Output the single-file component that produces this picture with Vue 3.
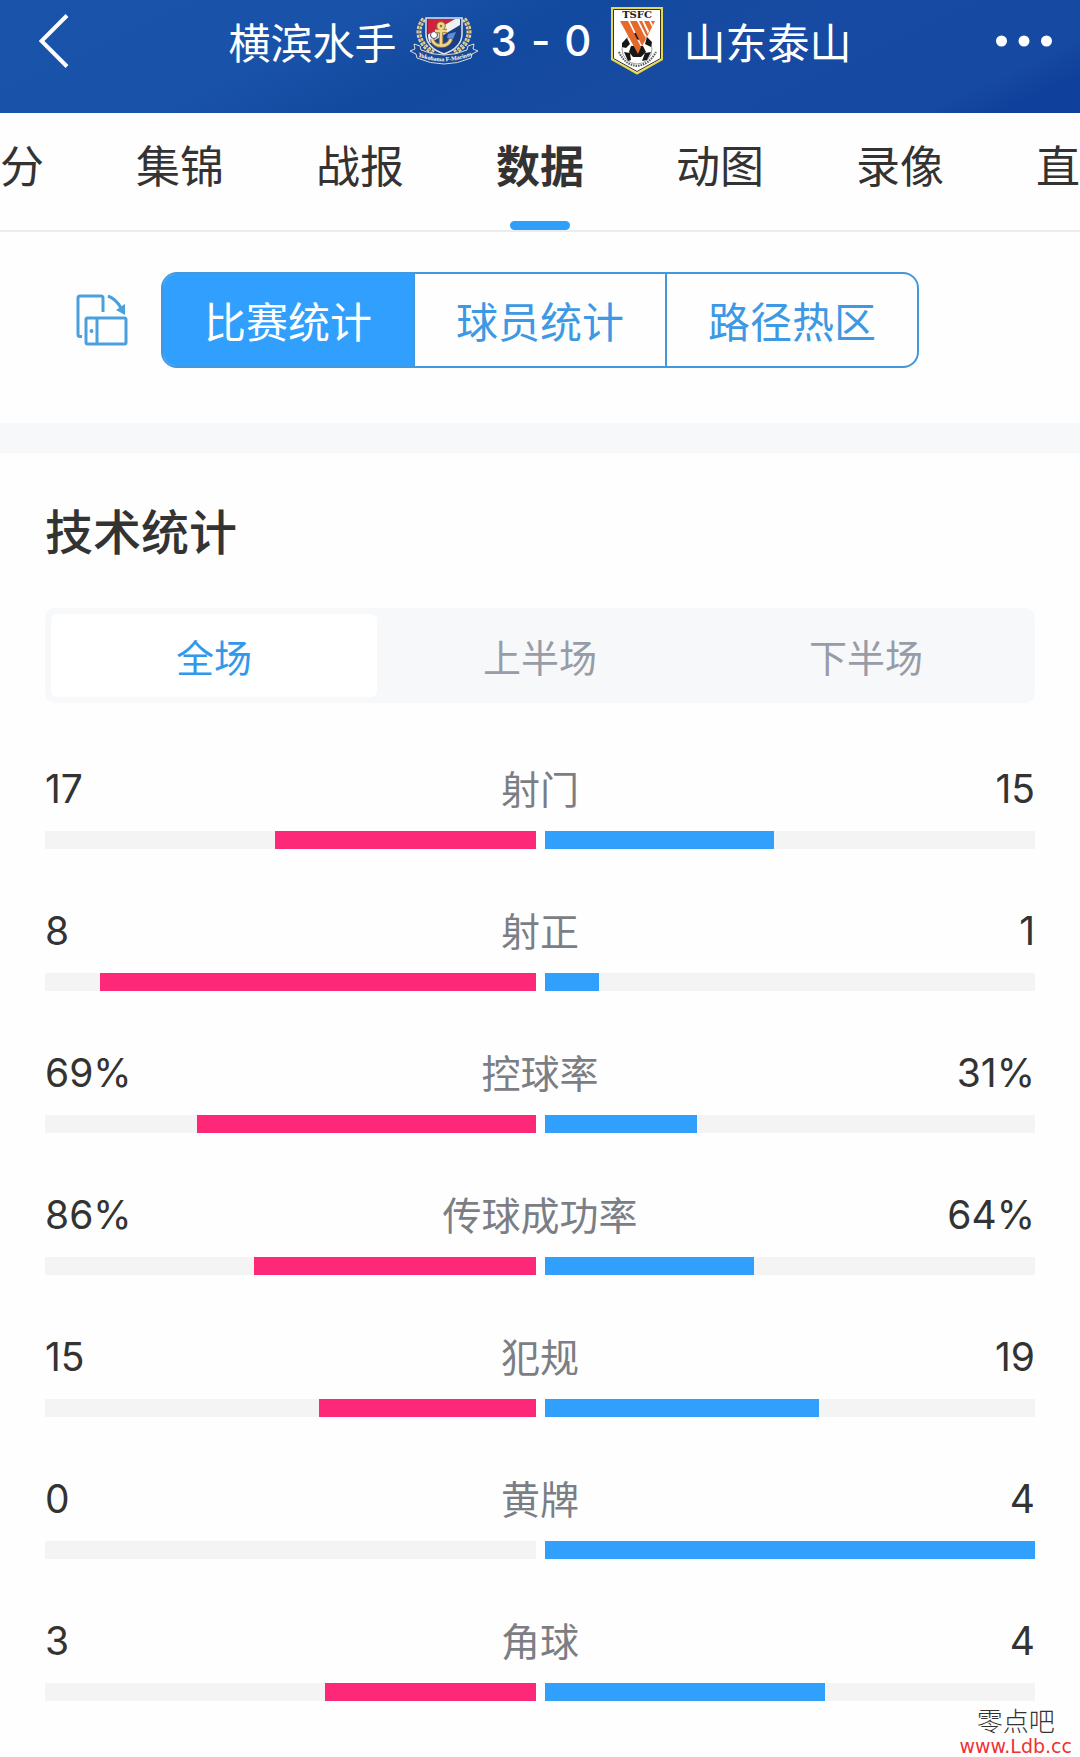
<script setup>
import { ref } from 'vue'

const tabs = ['分', '集锦', '战报', '数据', '动图', '录像', '直']
const activeTab = ref('数据')

const views = ['比赛统计', '球员统计', '路径热区']
const activeView = ref('比赛统计')

const periods = ['全场', '上半场', '下半场']
const activePeriod = ref('全场')

const stats = [
  { label: '射门', home: 17, away: 15 },
  { label: '射正', home: 8, away: 1 },
  { label: '控球率', home: 69, away: 31, unit: '%' },
  { label: '传球成功率', home: 86, away: 64, unit: '%' },
  { label: '犯规', home: 15, away: 19 },
  { label: '黄牌', home: 0, away: 4 },
  { label: '角球', home: 3, away: 4 }
]

const share = (value, row) => `${(value / (row.home + row.away)) * 100}%`
</script>

<template>
  <div class="page">
    <header class="header">
      <button class="icon-button back" type="button" aria-label="返回">
        <svg width="30" height="54" viewBox="0 0 30 54" fill="none" stroke="#fff" stroke-width="4">
          <path d="M28 1.500 2.500 27 28 52.500" />
        </svg>
      </button>

      <div class="match">
        <span class="team">横滨水手</span>
        <svg class="crest-home" width="70" height="50" viewBox="0 0 70 50" role="img" aria-label="横滨水手队徽">
          <g fill="none" stroke="#e0cf9c" stroke-width="5" stroke-dasharray="3 1.200">
            <path d="M15 3C6 14 9 28 25 37" />
            <path d="M55 3C64 14 61 28 45 37" />
          </g>
          <g fill="none" stroke="#93804f" stroke-width="1">
            <path d="M15 3C6 14 9 28 25 37" />
            <path d="M55 3C64 14 61 28 45 37" />
          </g>
          <path d="M17 2H53V18C53 28 46 34 35 38C24 34 17 28 17 18Z" fill="#1b3f86" stroke="#dfe5ef" stroke-width="1.500" />
          <path d="M19 3H46L19 19Z" fill="#d2203f" />
          <path d="M46 3H51V9L21 27C19.500 24 19 22 19 18.500Z" fill="#f2f1f0" />
          <circle cx="25" cy="19" r="3.500" fill="#fff" stroke="#33446f" />
          <path d="M39 18 47 16 44 23 38 22Z" fill="#5d8dd6" />
          <g fill="none" stroke="#8f7338" stroke-width="4.500">
            <circle cx="32" cy="10" r="2.500" />
            <path d="M32 12V30M26 15H38M23 23C25 32 39 32 42 23" />
          </g>
          <g fill="none" stroke="#eed68c" stroke-width="2.500">
            <circle cx="32" cy="10" r="2.500" />
            <path d="M32 12V30M26 15H38M23 23C25 32 39 32 42 23" />
          </g>
          <path d="M5 28 11 30 12 34Q35 44 58 34L59 30 65 28 64 33 69 35 63 38 62 42Q35 54 8 42L7 38 1 35 6 33Z" fill="#1b4a91" stroke="#d6dce4" stroke-width="1" />
          <path id="ribbon" d="M6 39Q35 52 66 38" fill="none" />
          <text class="ribbon-text"><textPath href="#ribbon" startOffset="50%">Yokohama F-Marinos</textPath></text>
        </svg>
        <span class="score"><span>3</span><span>-</span><span>0</span></span>
        <svg class="crest-away" width="54" height="70" viewBox="0 0 54 70" role="img" aria-label="山东泰山队徽">
          <path d="M1 1H53V54L27 69 1 54Z" fill="#2a2a18" />
          <path d="M2 2H52V53.500L27 67.500 2 53.500Z" fill="#fff" stroke="#e3d755" stroke-width="2" />
          <path d="M3.500 3.500H50.500V52.500L27 65.500 3.500 52.500Z" fill="none" stroke="#33321c" stroke-width="1" />
          <text x="27" y="12" class="crest-text">TSFC</text>
          <circle cx="27" cy="43" r="15" fill="#fff" stroke="#777" stroke-width=".7" />
          <path d="M21 40H33L36 46 31 51H23L19 46ZM12 37 17 32 20 38 16 42 12 41ZM37 31 42 36 41 41 35 38ZM14 46 20 47 21 54 18 55ZM35 47 41 46 37 54 32 55Z" fill="#171717" />
          <path d="M23 28 29 25 33 29 30 34 24 33Z" fill="#171717" />
          <g fill="#e6692b">
            <path d="M10 15H18L31 41 28 48Z" />
            <path d="M20 15H27L36 33 32 40Z" />
            <path d="M29 15H45L37 31Z" />
          </g>
          <path d="M32 15H34L39 25 38 28ZM39 15H41L43 19 42 21Z" fill="#fff" />
          <path d="M9 46C13 55 19 59 27 60C35 59 41 55 46 46" fill="none" stroke="#555" stroke-width="2" stroke-dasharray="1.500 1" />
        </svg>
        <span class="team">山东泰山</span>
      </div>

      <button class="icon-button more" type="button" aria-label="更多">
        <svg width="56" height="12" viewBox="0 0 56 12" fill="#fff">
          <circle cx="5.500" cy="6" r="5.500" />
          <circle cx="28" cy="6" r="5.500" />
          <circle cx="50.500" cy="6" r="5.500" />
        </svg>
      </button>
    </header>

    <nav class="tabs">
      <button
        v-for="tab in tabs"
        :key="tab"
        type="button"
        class="tab"
        :class="{ active: tab === activeTab }"
        @click="activeTab = tab"
      >{{ tab }}</button>
    </nav>

    <div class="views">
      <button class="icon-button rotate" type="button" aria-label="横屏">
        <svg width="52" height="52" viewBox="0 0 52 52" fill="none" stroke="#4a9fdd" stroke-width="3">
          <path d="M6 42.500H4Q2 42.500 2 40.500V4Q2 2 4 2H25Q27 2 27 4V18" />
          <rect x="10" y="24" width="40" height="26" rx="1.500" />
          <path d="M21 24V50" />
          <circle cx="15.500" cy="37" r="1.200" fill="#4a9fdd" stroke-width="1.500" />
          <path d="M32 2Q40 5 45 14" />
          <path d="M40 16 49 10V21Z" fill="#4a9fdd" stroke="none" />
        </svg>
      </button>
      <div class="segments">
        <button
          v-for="view in views"
          :key="view"
          type="button"
          class="segment"
          :class="{ active: view === activeView }"
          @click="activeView = view"
        >{{ view }}</button>
      </div>
    </div>

    <main class="panel">
      <h2 class="title">技术统计</h2>

      <div class="periods">
        <button
          v-for="period in periods"
          :key="period"
          type="button"
          class="period"
          :class="{ active: period === activePeriod }"
          @click="activePeriod = period"
        >{{ period }}</button>
      </div>

      <section class="stats">
        <div v-for="row in stats" :key="row.label" class="stat">
          <div class="figures">
            <span class="value">{{ row.home }}{{ row.unit }}</span>
            <span class="label">{{ row.label }}</span>
            <span class="value away">{{ row.away }}{{ row.unit }}</span>
          </div>
          <div class="bars">
            <div class="track home-track"><div class="fill home-fill" :style="{ width: share(row.home, row) }"></div></div>
            <div class="track"><div class="fill away-fill" :style="{ width: share(row.away, row) }"></div></div>
          </div>
        </div>
      </section>
    </main>

    <div class="watermark">
      <span class="mark-name">零点吧</span>
      <a class="mark-link" href="http://www.Ldb.cc">www.Ldb.cc</a>
    </div>
  </div>
</template>

<style>
body {
  margin: 0;
  background: #fefefe;
}
</style>

<style scoped>
.page {
  position: relative;
  overflow: hidden;
  background: #fefefe;
  color: #333;
  font-family: "Noto Sans CJK SC", "Noto Sans", sans-serif;
}

button {
  margin: 0;
  padding: 0;
  border: 0;
  background: none;
  color: inherit;
  font: inherit;
  cursor: pointer;
}

.icon-button {
  display: flex;
  align-items: center;
}

.header {
  display: grid;
  grid-template-columns: 1fr auto 1fr;
  align-items: center;
  box-sizing: border-box;
  height: 113px;
  padding: 0 28px 31px;
  background: linear-gradient(155deg, #1a53aa 0%, #1952a9 30%, #124a9f 44%, #174aa1 60%, #1649a1 88%, #0f409b 94%);
  color: #fff;
}

.back {
  padding-left: 11px;
}

.more {
  justify-self: end;
}

.match {
  display: flex;
  align-items: center;
}

.team {
  font-size: 42px;
  line-height: 52px;
}

.crest-home {
  margin: 0 12px;
}

.crest-away {
  margin: 0 20px 0 18px;
}

.score {
  display: flex;
  justify-content: space-between;
  width: 101px;
  font-family: Inter, sans-serif;
  font-size: 42px;
  font-weight: 500;
  line-height: 52px;
}

.ribbon-text {
  fill: #fff;
  font: bold 6px "Liberation Serif", serif;
  text-anchor: middle;
}

.crest-text {
  fill: #222;
  font: bold 10px "DejaVu Serif", serif;
  text-anchor: middle;
}

.tabs {
  display: flex;
  height: 117px;
  border-bottom: 2px solid #ececec;
}

.tab {
  position: relative;
  flex: 2 1 0;
  padding-bottom: 16px;
  font-size: 44px;
  line-height: 60px;
  white-space: nowrap;
}

.tab:first-child {
  flex-grow: 1;
  text-align: left;
}

.tab:last-child {
  flex-grow: 1;
  text-align: right;
}

.tab.active {
  font-weight: 700;
}

.tab.active::after {
  position: absolute;
  bottom: 0;
  left: 50%;
  width: 60px;
  height: 9px;
  margin-left: -30px;
  border-radius: 5px;
  background: #309ffb;
  content: "";
}

.views {
  display: grid;
  grid-template-columns: 85px 1fr;
  align-items: center;
  padding: 40px 161px 55px 76px;
}

.segments {
  display: flex;
  box-sizing: border-box;
  height: 96px;
  overflow: hidden;
  border: 2px solid #4298dd;
  border-radius: 16px;
}

.segment {
  flex: 1 1 0;
  color: #3d99e4;
  font-size: 42px;
  line-height: 52px;
}

.segment + .segment {
  border-left: 2px solid #4298dd;
}

.segment.active {
  background: #309ffe;
  box-shadow: 0 0 0 2px #309ffe;
  color: #fff;
}

.panel {
  padding: 46px 45px 56px;
  border-top: 30px solid #f6f8fa;
}

.title {
  margin: 0 0 49px;
  font-size: 48px;
  font-weight: 500;
  line-height: 60px;
}

.periods {
  display: flex;
  box-sizing: border-box;
  height: 95px;
  padding: 6px;
  border-radius: 10px;
  background: #f7f8fa;
}

.period {
  flex: 1 1 0;
  border-radius: 6px;
  color: #989ca6;
  font-size: 38px;
  line-height: 52px;
}

.period.active {
  background: #fff;
  color: #3298ec;
}

.stats {
  display: flex;
  flex-direction: column;
  gap: 56px;
  padding-top: 60px;
}

.figures {
  display: grid;
  grid-template-columns: 1fr auto 1fr;
  align-items: start;
  margin-bottom: 16px;
}

.value {
  font-family: Inter, sans-serif;
  font-size: 39px;
  line-height: 52px;
}

.away {
  text-align: right;
}

.label {
  color: #7c7e85;
  font-size: 39px;
  line-height: 48px;
}

.bars {
  display: grid;
  grid-template-columns: 1fr 1fr;
  gap: 9px;
}

.track {
  display: flex;
  height: 18px;
  background: #f4f4f4;
}

.home-track {
  justify-content: flex-end;
}

.home-fill {
  background: #fd2877;
}

.away-fill {
  background: #31a0fc;
}

.watermark {
  position: absolute;
  right: 8px;
  bottom: 0;
  display: flex;
  flex-direction: column;
  align-items: center;
}

.mark-name {
  font-family: "AR PL UKai CN", KaiTi, "Noto Sans CJK SC", serif;
  font-size: 26px;
  font-weight: 300;
  line-height: 30px;
}

.mark-link {
  color: #ee3236;
  font-family: "Comic Sans MS", "DejaVu Sans", sans-serif;
  font-size: 19px;
  line-height: 22px;
  text-decoration: none;
}
</style>
